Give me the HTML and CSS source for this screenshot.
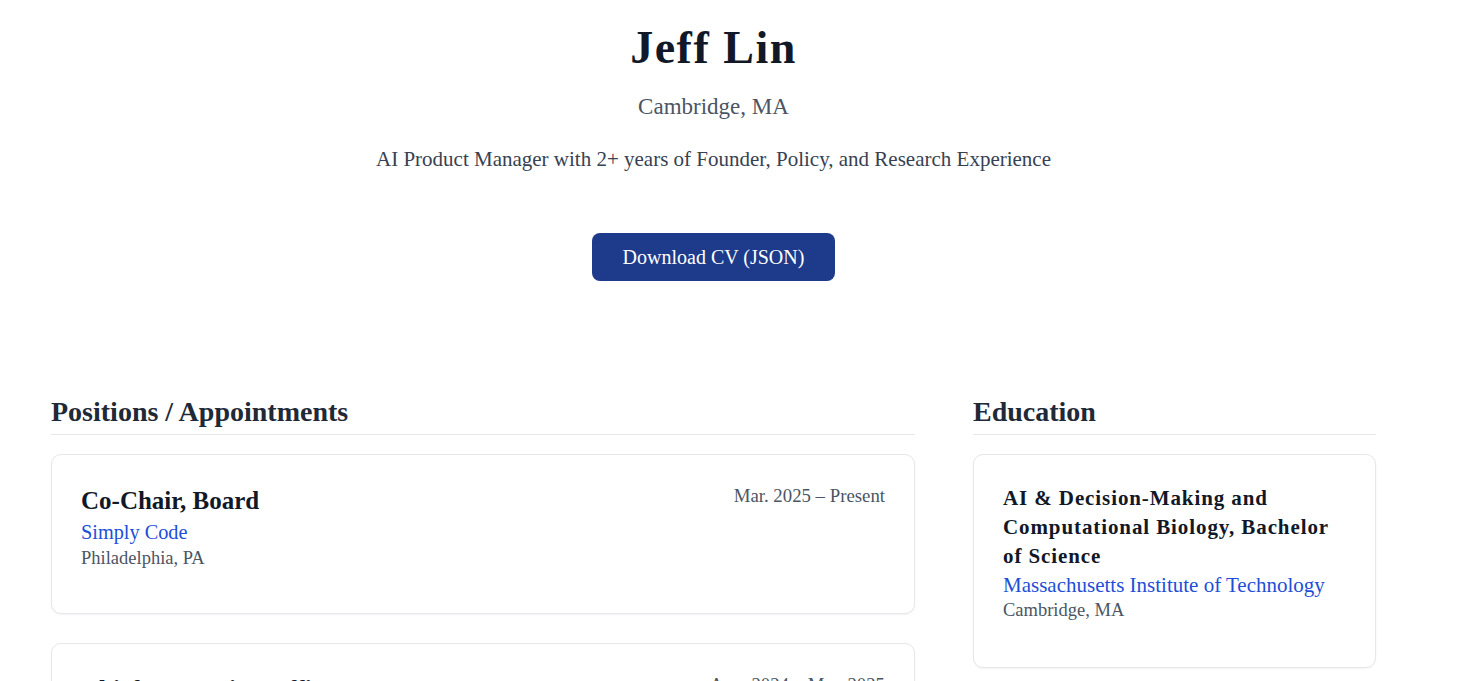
FILE: index.html
```html
<!DOCTYPE html>
<html lang="en">
<head>
<meta charset="utf-8">
<title>Jeff Lin — CV</title>
<link rel="stylesheet" href="styles.css">
</head>
<body>
<div class="page">
  <header class="hero">
    <h1 class="name">Jeff Lin</h1>
    <p class="location">Cambridge, MA</p>
    <p class="tagline">AI Product Manager with 2+ years of Founder, Policy, and Research Experience</p>
    <a class="download" href="#">Download CV (JSON)</a>
  </header>

  <main class="columns">
    <section class="section">
      <h2 class="section-title">Positions / Appointments</h2>
      <div class="cards">
        <article class="card">
          <div class="card-head">
            <h3 class="card-title">Co-Chair, Board</h3>
            <span class="date">Mar. 2025 – Present</span>
          </div>
          <div class="org">Simply Code</div>
          <div class="place">Philadelphia, PA</div>
        </article>
        <article class="card">
          <div class="card-head">
            <h3 class="card-title">Chief Innovation Officer</h3>
            <span class="date">Aug. 2024 – Mar. 2025</span>
          </div>
          <div class="org">Simply Code</div>
          <div class="place">Philadelphia, PA</div>
        </article>
      </div>
    </section>

    <section class="section">
      <h2 class="section-title">Education</h2>
      <div class="cards">
        <article class="card edu">
          <h3 class="edu-title">AI &amp; Decision-Making and Computational Biology, Bachelor of Science</h3>
          <div class="org">Massachusetts Institute of Technology</div>
          <div class="place">Cambridge, MA</div>
        </article>
      </div>
    </section>
  </main>
</div>
</body>
</html>
```

FILE: styles.css
```css
* { box-sizing: border-box; }
html, body { margin: 0; padding: 0; background: #ffffff; }
body {
  font-family: "Liberation Serif", "Times New Roman", serif;
  color: #1f2937;
}
.page {
  width: 1325px;
  margin-left: 51px;
}
.hero {
  display: flex;
  flex-direction: column;
  align-items: center;
  padding-top: 22px;
}
.name {
  margin: 0;
  font-size: 46px;
  line-height: 52px;
  font-weight: 700;
  color: #111827;
  letter-spacing: 1.5px;
}
.location {
  margin: 19px 0 0;
  font-size: 23px;
  line-height: 28px;
  color: #4b5563;
}
.tagline {
  margin: 25px 0 0;
  font-size: 21px;
  line-height: 26px;
  color: #374151;
}
.download {
  margin-top: 61px;
  display: block;
  width: 243px;
  height: 48px;
  line-height: 48px;
  text-align: center;
  background: #1e3a8a;
  color: #ffffff;
  text-decoration: none;
  border-radius: 8px;
  font-size: 20px;
}
.columns {
  display: grid;
  grid-template-columns: 864px 403px;
  gap: 58px;
  margin-top: 113px;
  align-items: start;
}
.section-title {
  margin: 0;
  font-size: 28px;
  line-height: 34px;
  font-weight: 700;
  color: #1f2937;
  padding: 1px 0 5px;
  border-bottom: 1px solid #e5e7eb;
}
.cards {
  display: flex;
  flex-direction: column;
  gap: 29px;
  margin-top: 19px;
}
.card {
  border: 1px solid #e5e7eb;
  border-radius: 10px;
  background: #fff;
  box-shadow: 0 1px 2px rgba(0,0,0,0.05);
  padding: 30px 29px 40px;
  min-height: 160px;
}
.card-head {
  display: flex;
  justify-content: space-between;
  align-items: flex-start;
}
.card-title {
  margin: 1px 0 0;
  font-size: 25px;
  line-height: 30px;
  font-weight: 700;
  color: #111827;
}
.date {
  font-size: 18.8px;
  line-height: 22px;
  color: #4b5563;
}
.org {
  margin-top: 3px;
  font-size: 20.3px;
  line-height: 26px;
  color: #1d4ed8;
}
.place {
  margin-top: 2px;
  font-size: 18.5px;
  line-height: 22px;
  color: #4b5563;
}
.edu { padding: 29px 29px 46px; }
.edu-title {
  margin: 0;
  font-size: 21px;
  line-height: 29px;
  font-weight: 700;
  color: #111827;
  letter-spacing: 0.9px;
}
.edu .org { margin-top: 1px; font-size: 21px; }
.edu .place { margin-top: 1px; }
```
